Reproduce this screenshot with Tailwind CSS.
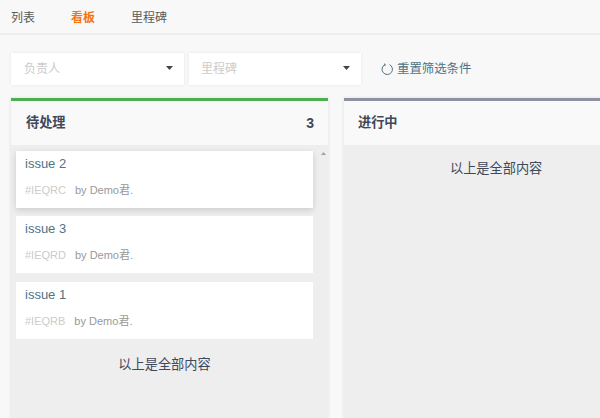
<!DOCTYPE html>
<html lang="zh">
<head>
  <meta charset="UTF-8" />
  <title>看板</title>
  <script src="https://cdn.jsdelivr.net/npm/@tailwindcss/browser@4"></script>
</head>
<body class="w-[600px] h-[418px] overflow-hidden bg-[#f8f8f8] text-[#40485b] font-['Liberation_Sans','Noto_Sans_CJK_SC',sans-serif]">

  <!-- tabs -->
  <nav class="h-[35px] border-b-2 border-[#eeeeee] flex items-center pl-[11px] pt-[2px] text-[12px] text-[#5a5a5a]">
    <a class="w-[60px]">列表</a>
    <a class="w-[60px] font-bold text-[#f6730f]">看板</a>
    <a>里程碑</a>
  </nav>

  <!-- filters -->
  <div class="flex items-start pl-[11px] pt-[18px] h-[63px] text-[12px]">
    <div class="w-[173px] h-[32px] bg-white shadow-[0_0_3px_rgba(0,0,0,0.08)] flex items-center justify-between pl-[13px] pr-[11px] text-[#cccccc]">
      <span>负责人</span>
      <svg class="mb-[3px]" width="7" height="4" viewBox="0 0 7 4"><path d="M0 0h7L3.5 4z" fill="#444"/></svg>
    </div>
    <div class="ml-[5px] w-[172px] h-[32px] bg-white shadow-[0_0_3px_rgba(0,0,0,0.08)] flex items-center justify-between pl-[12px] pr-[11px] text-[#cccccc]">
      <span>里程碑</span>
      <svg class="mb-[3px]" width="7" height="4" viewBox="0 0 7 4"><path d="M0 0h7L3.5 4z" fill="#444"/></svg>
    </div>
    <a class="ml-[20px] h-[32px] flex items-center gap-[3px] text-[12.4px] text-[#4d7387]">
      <svg width="13" height="13" viewBox="0 0 13 13" fill="none" stroke="#4d7387" stroke-width="1"><path d="M4 1.6A5.2 5.2 0 1 0 8.5 1.6"/><path d="M3 0.8L4.4 1.6L3.6 3"/></svg>
      <span>重置筛选条件</span>
    </a>
  </div>

  <!-- board -->
  <div class="flex pl-[11px] gap-[16px]">
    <section class="w-[317px] h-[320px] shrink-0 flex flex-col border-t-[3px] border-[#4caf50] shadow-[0_0_3px_rgba(0,0,0,0.12)]">
      <header class="h-[46px] shrink-0 bg-[#f9f9f9] border-b-2 border-[#eeeeee] flex items-center justify-between pl-[15px] pr-[14px] text-[13.2px] font-bold">
        <span>待处理</span>
        <span class="text-[14px]">3</span>
      </header>
      <div class="flex-1 flex bg-[#eeeeee]">
        <div class="w-[307px] pt-[4px] pl-[5px] pr-[5px]">
          <div class="h-[57px] bg-white shadow-[0_2px_6px_rgba(0,0,0,0.15)] pl-[9px] pt-[4px]">
            <p class="text-[13px] leading-[18px] text-[#4d7387]">issue 2</p>
            <p class="mt-[9px] text-[11px] leading-[16px] text-[#999]"><span class="text-[#ccc] mr-[9px]">#IEQRC</span>by Demo君.</p>
          </div>
          <div class="h-[57px] mt-[8px] bg-white pl-[9px] pt-[4px]">
            <p class="text-[13px] leading-[18px] text-[#4d7387]">issue 3</p>
            <p class="mt-[9px] text-[11px] leading-[16px] text-[#999]"><span class="text-[#ccc] mr-[9px]">#IEQRD</span>by Demo君.</p>
          </div>
          <div class="h-[57px] mt-[9px] bg-white pl-[9px] pt-[4px]">
            <p class="text-[13px] leading-[18px] text-[#4d7387]">issue 1</p>
            <p class="mt-[9px] text-[11px] leading-[16px] text-[#999]"><span class="text-[#ccc] mr-[9px]">#IEQRB</span>by Demo君.</p>
          </div>
          <p class="mt-[16px] text-center text-[13.2px] leading-[20px]">以上是全部内容</p>
        </div>
        <div class="w-[10px] flex justify-center pt-[5px]">
          <svg width="5" height="3" viewBox="0 0 5 3"><path d="M0 3h5L2.5 0z" fill="#a3a3a3"/></svg>
        </div>
      </div>
    </section>

    <section class="w-[270px] h-[320px] shrink-0 flex flex-col border-t-[3px] border-[#8c92a4] shadow-[0_0_3px_rgba(0,0,0,0.12)]">
      <header class="h-[46px] shrink-0 bg-[#f9f9f9] border-b-2 border-[#eeeeee] flex items-center pl-[14px] text-[13.2px] font-bold">进行中</header>
      <div class="flex-1 bg-[#eeeeee] pt-[12px] pl-[106px] text-[13.2px] leading-[20px]">以上是全部内容</div>
    </section>
  </div>
</body>
</html>
